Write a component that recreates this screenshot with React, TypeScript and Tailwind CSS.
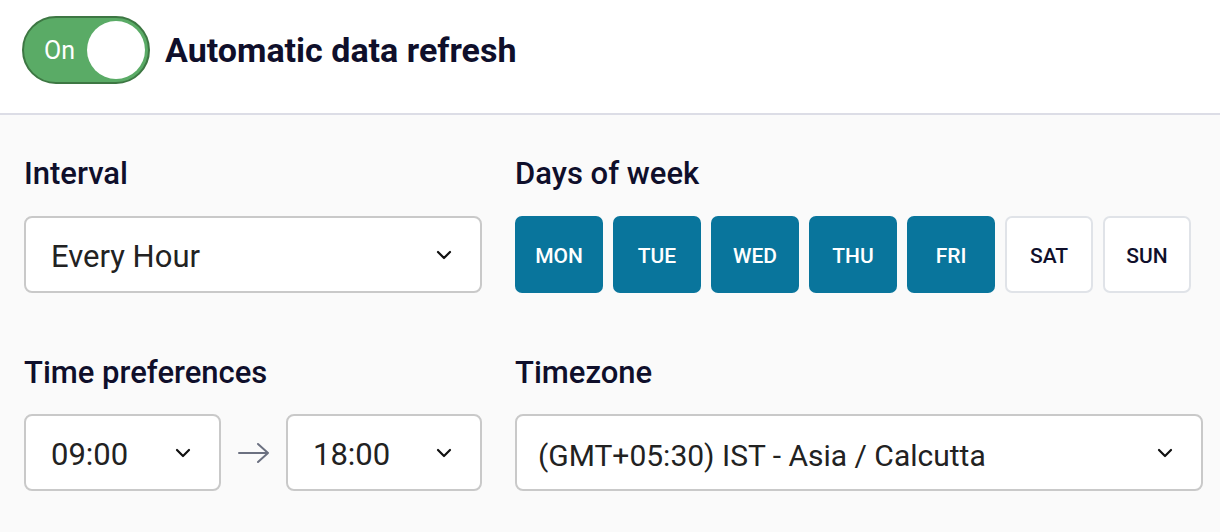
import React, { useState } from "react";

const days = ["MON", "TUE", "WED", "THU", "FRI", "SAT", "SUN"];

const Chevron = () => (
  <svg width="16" height="10" viewBox="0 0 16 10" fill="none" className="shrink-0">
    <path d="M2 2l6 6 6-6" stroke="#111" strokeWidth="2.2" strokeLinecap="round" strokeLinejoin="round" />
  </svg>
);

const SelectBox = ({
  value,
  className = "",
  textClass = "pl-[25px] text-[31px]",
}: {
  value: string;
  className?: string;
  textClass?: string;
}) => (
  <div
    className={`h-[77px] flex items-center justify-between bg-white border-2 border-[#c9c9c9] rounded-[8px] pr-[28px] text-[#222] ${textClass} ${className}`}
  >
    <span className="whitespace-nowrap pt-[5px]">{value}</span>
    <Chevron />
  </div>
);

const Label = ({ children }: { children: React.ReactNode }) => (
  <div className="text-[31px] leading-[36px] font-medium text-[#0f0f2b]">{children}</div>
);

export default function App() {
  const [enabled, setEnabled] = useState(true);
  const [selected, setSelected] = useState<string[]>(["MON", "TUE", "WED", "THU", "FRI"]);

  const toggleDay = (d: string) =>
    setSelected((s) => (s.includes(d) ? s.filter((x) => x !== d) : [...s, d]));

  return (
    <div className="w-[1220px] h-[532px] bg-[#fafafa] overflow-hidden" style={{ fontFamily: "Roboto, sans-serif" }}>
      {/* Header */}
      <div className="h-[115px] bg-white border-b-2 border-[#dcdde6] pt-[16px] pl-[22px]">
        <div className="h-[68px] flex items-center gap-[15px]">
          <button
            onClick={() => setEnabled(!enabled)}
            className="w-[128px] h-[68px] rounded-full bg-[#5aab66] border-2 border-[#3d7743] flex items-center justify-between pl-[20px] pr-[3px]"
          >
            <span className="text-white text-[25px] leading-none">On</span>
            <span className="w-[58px] h-[58px] rounded-full bg-white" />
          </button>
          <h1 className="text-[34px] leading-[40px] font-bold text-[#0f0f2b]">Automatic data refresh</h1>
        </div>
      </div>

      {/* Body */}
      <div className="px-[24px] pt-[41px] grid grid-cols-[458px_688px] gap-x-[33px]">
        <div>
          <Label>Interval</Label>
          <SelectBox value="Every Hour" className="mt-[24px]" />
        </div>
        <div>
          <Label>Days of week</Label>
          <div className="mt-[24px] flex gap-[10px]">
            {days.map((d) => {
              const on = selected.includes(d);
              return (
                <button
                  key={d}
                  onClick={() => toggleDay(d)}
                  className={`w-[88px] h-[77px] rounded-[7px] text-[21px] font-medium flex items-center justify-center pt-[4px] ${
                    on ? "bg-[#09759c] text-white" : "bg-white border-2 border-[#e0e3e8] text-[#0f0f2b]"
                  }`}
                >
                  {d}
                </button>
              );
            })}
          </div>
        </div>

        <div className="mt-[62px]">
          <Label>Time preferences</Label>
          <div className="mt-[23px] flex items-center">
            <SelectBox value="09:00" className="w-[197px]" />
            <div className="flex-1 flex justify-center">
              <svg width="34" height="22" viewBox="0 0 34 22" fill="none">
                <path d="M2 11h29M21 2l10 9-10 9" stroke="#6b7080" strokeWidth="2" strokeLinecap="round" strokeLinejoin="round" />
              </svg>
            </div>
            <SelectBox value="18:00" className="w-[196px]" />
          </div>
        </div>
        <div className="mt-[62px]">
          <Label>Timezone</Label>
          <SelectBox
            value="(GMT+05:30) IST - Asia / Calcutta"
            className="mt-[23px]"
            textClass="pl-[21px] text-[30px]"
          />
        </div>
      </div>
    </div>
  );
}
